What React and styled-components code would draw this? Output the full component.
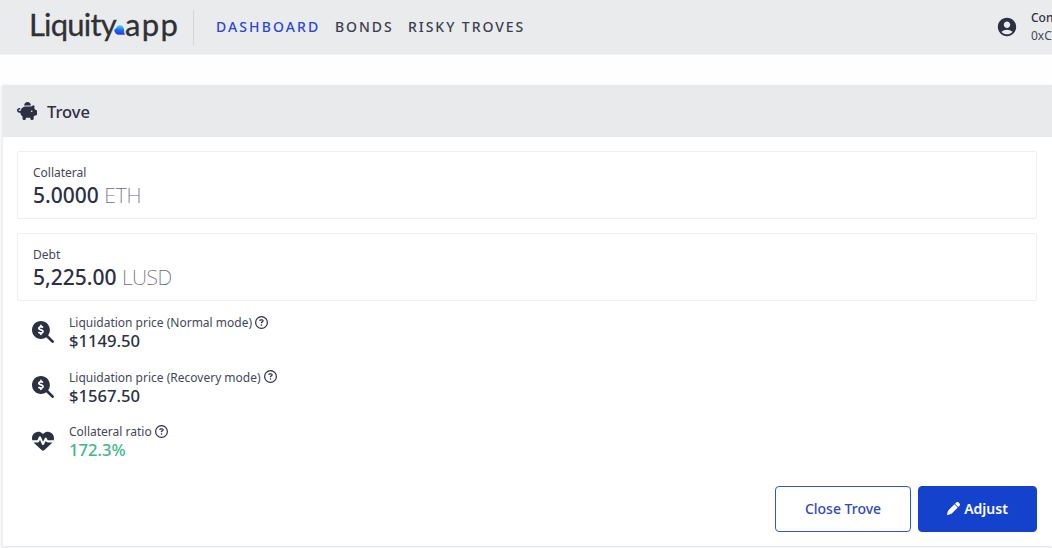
import React from "react";
//Importing Styles
import styled, { createGlobalStyle } from "styled-components";
//Importing icons
import {
  FaPiggyBank,
  FaMagnifyingGlassDollar,
  FaHeartPulse,
  FaRegCircleQuestion,
  FaPen,
} from "react-icons/fa6";
import { MdAccountCircle } from "react-icons/md";

const App = () => {
  return (
    <>
      <GlobalStyle />
      <Header>
        <Logo>
          <LogoText $spacing="-0.8px" $width="84px">
            Liquity
          </LogoText>
          <Drop />
          <LogoText $spacing="1.4px" $width="54px">
            app
          </LogoText>
        </Logo>
        <Nav>
          <NavLink $active $spacing="2.1px" $width="119px">
            Dashboard
          </NavLink>
          <NavLink $width="73px">Bonds</NavLink>
          <NavLink>Risky Troves</NavLink>
        </Nav>
        <Account>
          <MdAccountCircle size={22} />
          <div>
            <h4>Connected as</h4>
            <p>0xC4f1...82aB</p>
          </div>
        </Account>
      </Header>
      <Panel>
        <PanelTitle>
          <FaPiggyBank size={20} />
          <h2>Trove</h2>
        </PanelTitle>
        <PanelBody>
          <Field>
            <Label>Collateral</Label>
            <Amount>
              5.0000 <Unit>ETH</Unit>
            </Amount>
          </Field>
          <Field>
            <Label>Debt</Label>
            <Amount>
              5,225.00 <Unit $spacing="-0.5px">LUSD</Unit>
            </Amount>
          </Field>
          <Stats>
            <Stat>
              <FaMagnifyingGlassDollar size={22} />
              <div>
                <Label>
                  Liquidation price (Normal mode) <FaRegCircleQuestion />
                </Label>
                <StatValue>$1149.50</StatValue>
              </div>
            </Stat>
            <Stat>
              <FaMagnifyingGlassDollar size={22} />
              <div>
                <Label>
                  Liquidation price (Recovery mode) <FaRegCircleQuestion />
                </Label>
                <StatValue>$1567.50</StatValue>
              </div>
            </Stat>
            <Stat>
              <FaHeartPulse size={22} />
              <div>
                <Label>
                  Collateral ratio <FaRegCircleQuestion />
                </Label>
                <StatValue $healthy>172.3%</StatValue>
              </div>
            </Stat>
          </Stats>
          <Actions>
            <Button $width="136px">Close Trove</Button>
            <Button $primary $width="119px">
              <FaPen size={13} />
              Adjust
            </Button>
          </Actions>
        </PanelBody>
      </Panel>
    </>
  );
};

//Blue drop between the two words of the logo
const Drop = () => (
  <DropIcon viewBox="0 0 11 10">
    <defs>
      <linearGradient id="drop" x1="0.6" y1="0" x2="0.4" y2="1">
        <stop offset="0.15" stopColor="#35bff2" />
        <stop offset="0.5" stopColor="#1c6cec" />
        <stop offset="1" stopColor="#2a35d8" />
      </linearGradient>
    </defs>
    <path
      d="M5.6 0.2A4.5 4.5 0 0 1 10.1 4.8Q10 7.8 11 9.7H5.2A4.8 4.8 0 0 1 0.3 4.4Q2 4.4 2.6 2.6Q3.4 0.3 5.6 0.2Z"
      fill="url(#drop)"
    />
  </DropIcon>
);

const GlobalStyle = createGlobalStyle`
  * {
    margin: 0;
    padding: 0;
    box-sizing: border-box;
  }

  body {
    height: 548px;
    overflow: hidden;
    background: #fefefe;
    color: #2c3043;
    font-family: "Noto Sans", "Open Sans", sans-serif;
  }

  svg {
    flex-shrink: 0;
  }
`;

const Header = styled.header`
  display: flex;
  align-items: center;
  height: 55px;
  overflow: hidden;
  background: #eaebed;
  border-bottom: 1px solid #f1f2f3;
`;

const Logo = styled.div`
  display: flex;
  height: 35px;
  width: 194px;
  padding-left: 29px;
  border-right: 1px solid #d3d5d9;
`;

const LogoText = styled.span`
  width: ${({ $width }) => $width};
  font-family: Lato, sans-serif;
  font-size: 31px;
  line-height: 29px;
  letter-spacing: ${({ $spacing }) => $spacing};
  color: #303134;
  -webkit-text-stroke: 0.3px #303134;
  white-space: nowrap;
`;

const DropIcon = styled.svg`
  width: 11px;
  height: 10px;
  margin: 15px 0 0 1px;
`;

const Nav = styled.nav`
  display: flex;
  padding-left: 22px;
`;

const NavLink = styled.a`
  width: ${({ $width }) => $width || "auto"};
  font-size: 14px;
  font-weight: 500;
  line-height: 20px;
  letter-spacing: ${({ $spacing }) => $spacing || "1.95px"};
  text-transform: uppercase;
  white-space: nowrap;
  color: ${({ $active }) => ($active ? "#2b46d6" : "#3a3e4e")};
`;

const Account = styled.div`
  display: flex;
  align-items: center;
  gap: 13px;
  width: 56px;
  margin-left: auto;
  margin-top: -1px;
  white-space: nowrap;

  h4 {
    font-size: 12px;
    font-weight: 500;
    line-height: 18px;
  }

  p {
    font-size: 12px;
    font-weight: 400;
    line-height: 18px;
    color: #444858;
  }
`;

const Panel = styled.section`
  height: 461px;
  margin: 30px 0 0 2px;
  background: #fff;
  border-left: 1px solid #eeeff1;
  box-shadow: 0 1px 3px rgba(40, 45, 60, 0.16);
`;

const PanelTitle = styled.div`
  display: flex;
  align-items: center;
  gap: 10px;
  height: 52px;
  padding-left: 14px;
  background: #e9eaec;

  h2 {
    font-size: 16.5px;
    font-weight: 500;
  }
`;

const PanelBody = styled.div`
  display: flex;
  flex-direction: column;
  padding: 14px 15px 0 14px;
`;

const Field = styled.div`
  height: 68px;
  margin-bottom: 14px;
  padding: 12px 15px;
  border: 1px solid #eeeff1;
  border-radius: 2px;
`;

const Label = styled.div`
  display: flex;
  align-items: center;
  gap: 3px;
  height: 18px;
  font-size: 12px;
  line-height: 18px;
  white-space: nowrap;
  color: #444858;

  svg {
    margin-top: -2px;
    font-size: 13px;
    color: #2c3043;
  }
`;

const Amount = styled.div`
  font-size: 21px;
  font-weight: 500;
  line-height: 27px;
`;

const Unit = styled.span`
  font-weight: 200;
  letter-spacing: ${({ $spacing }) => $spacing || "0"};
  color: #6a6d7a;
`;

const Stats = styled.div`
  display: grid;
  grid-template-rows: repeat(3, 54.5px);
  margin: -1px 0 1px;
`;

const Stat = styled.div`
  display: flex;
  gap: 15px;
  padding-left: 15px;

  > svg {
    margin-top: 7px;
  }
`;

const StatValue = styled.div`
  font-size: 16.6px;
  font-weight: 500;
  line-height: 18px;
  color: ${({ $healthy }) => ($healthy ? "#3fb983" : "#2c3043")};
`;

const Actions = styled.div`
  display: flex;
  justify-content: flex-end;
  gap: 7px;
  margin-top: 7px;
`;

const Button = styled.button`
  display: flex;
  align-items: center;
  justify-content: center;
  gap: 4px;
  width: ${({ $width }) => $width};
  height: 46px;
  border: 1px solid ${({ $primary }) => ($primary ? "#1542cd" : "#3557c4")};
  border-radius: 4px;
  background: ${({ $primary }) => ($primary ? "#1542cd" : "#fff")};
  color: ${({ $primary }) => ($primary ? "#fff" : "#3048c0")};
  font-family: inherit;
  font-size: 14px;
  font-weight: ${({ $primary }) => ($primary ? 600 : 500)};
`;

export default App;
